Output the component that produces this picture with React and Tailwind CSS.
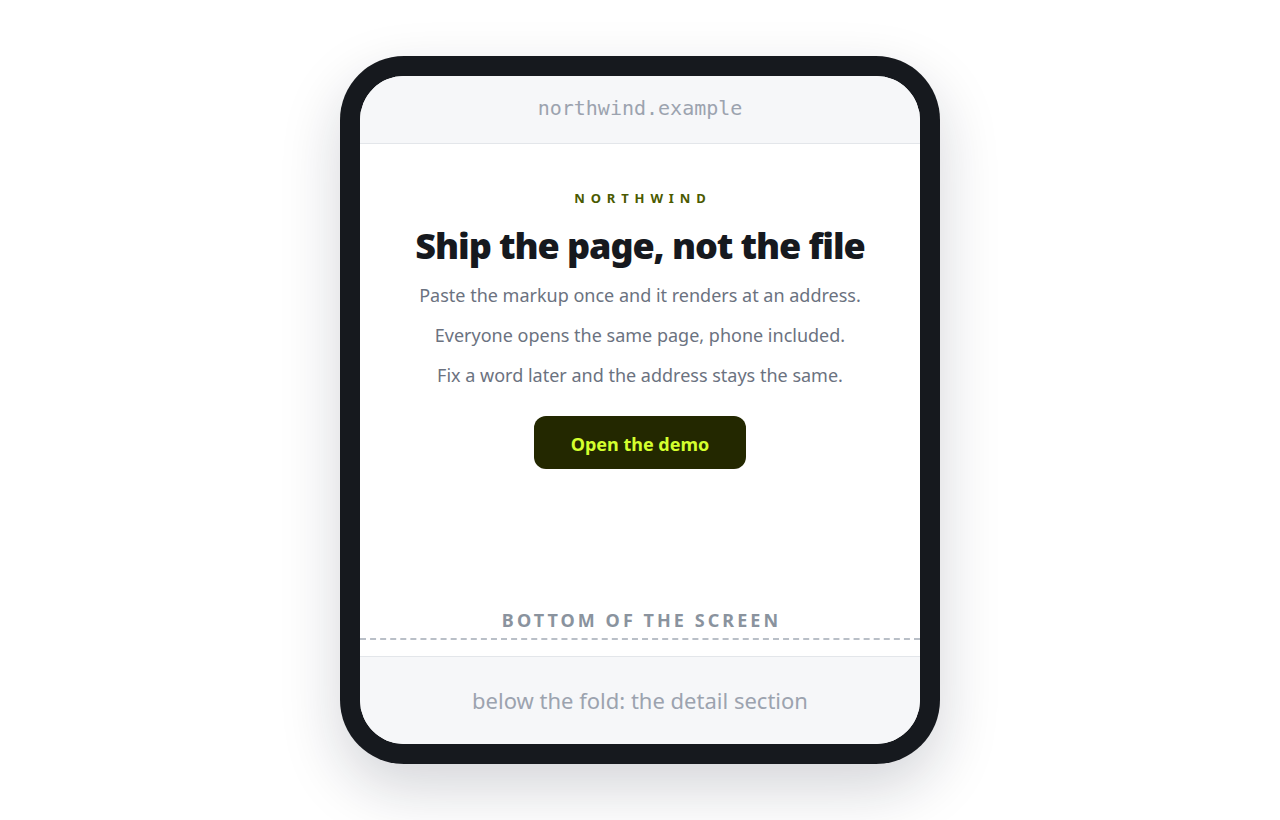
export default function App() {
  return (
    <div className="w-full h-[820px] bg-white flex items-center justify-center" style={{ fontFamily: '"Noto Sans", "Open Sans", sans-serif' }}>
      <div className="w-[600px] h-[708px] rounded-[64px] bg-[#16191e] p-[20px] shadow-[0_24px_60px_rgba(15,23,42,0.18)]">
        <div className="w-full h-full rounded-[44px] overflow-hidden bg-white flex flex-col">
          <div className="h-[68px] shrink-0 bg-[#f6f7f9] border-b border-[#e3e6ea] flex items-center justify-center pb-[3px]">
            <span className="text-[20px] text-[#9ca3af]" style={{ fontFamily: '"DejaVu Sans Mono", "Liberation Mono", monospace' }}>northwind.example</span>
          </div>
          <div className="h-[496px] shrink-0 border-b-2 border-dashed border-[#b9bfc7] flex flex-col items-center">
            <div className="mt-[45px] text-[13px] font-bold tracking-[0.45em] text-[#4a5a00] pl-[0.45em]">NORTHWIND</div>
            <h1 className="mt-[13px] text-[36px] leading-[48px] font-black tracking-[-0.03em] text-[#16191e]">Ship the page, not the file</h1>
            <div className="mt-[13px] flex flex-col items-center gap-[15px] text-[18px] leading-[25px] text-[#6b7280]">
              <p>Paste the markup once and it renders at an address.</p>
              <p>Everyone opens the same page, phone included.</p>
              <p>Fix a word later and the address stays the same.</p>
            </div>
            <button className="mt-[28px] w-[212px] h-[53px] pt-[5px] rounded-[12px] bg-[#232800] text-[#d4ff2e] text-[18px] font-bold">Open the demo</button>
            <div className="flex-1" />
            <div className="mb-[6px] text-[18px] leading-[24px] font-bold tracking-[0.17em] text-[#8a939e] pl-[0.17em]">BOTTOM OF THE SCREEN</div>
          </div>
          <div className="h-[16px] shrink-0 bg-white" />
          <div className="flex-1 bg-[#f6f7f9] border-t border-[#e3e6ea] flex items-center justify-center">
            <span className="text-[22px] text-[#9ca3af]">below the fold: the detail section</span>
          </div>
        </div>
      </div>
    </div>
  );
}
